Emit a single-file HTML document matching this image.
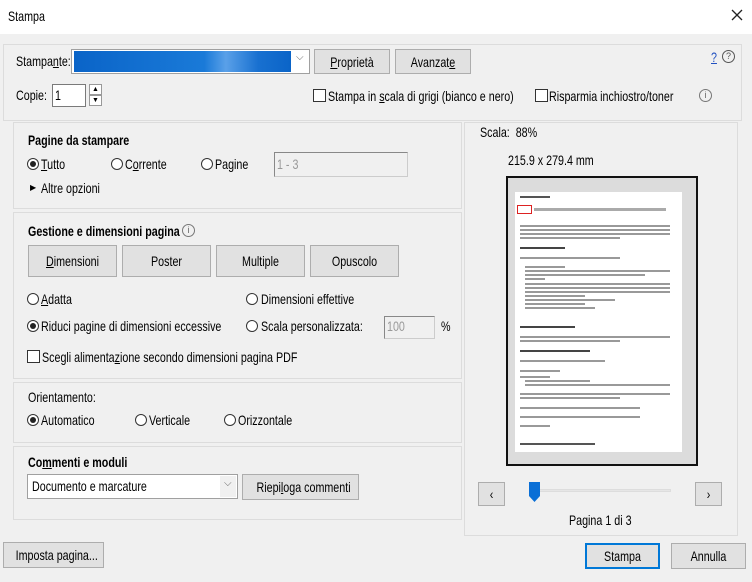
<!DOCTYPE html>
<html><head><meta charset="utf-8"><style>
*{box-sizing:border-box;margin:0;padding:0}
body{width:752px;height:582px;background:#f0f0f0;position:relative;overflow:hidden;font-family:"Liberation Sans",sans-serif;font-size:14px;color:#000}
.a{position:absolute}
.t{position:absolute;white-space:nowrap;transform:scaleX(.765);transform-origin:0 50%;line-height:14px}
.b{font-weight:bold}
.panel{position:absolute;border:1px solid #dcdcdc;background:#f0f0f0}
.btn{position:absolute;background:#e1e1e1;border:1px solid #adadad}
.btn span{position:absolute;left:0;right:0;top:50%;margin-top:-7px;text-align:center;line-height:14px;white-space:nowrap;transform:scaleX(.765)}
.r{position:absolute;width:12px;height:12px;border:1px solid #333;border-radius:50%;background:#fff}
.r.on::after{content:"";position:absolute;left:2px;top:2px;width:6px;height:6px;border-radius:50%;background:#222}
.c{position:absolute;width:13px;height:13px;border:1px solid #333;background:#fff}
.in{position:absolute;background:#fff;border:1px solid #7a7a7a}
.dis{background:#f0f0f0;border:1px solid #ccc;color:#888}
u{text-decoration:underline}
.ln{position:absolute;height:2px;background:#999}
</style></head><body>
<div class="a" style="left:0;top:0;width:752px;height:34px;background:#fff"></div>
<div class="t" style="left:8px;top:9px">Stampa</div>
<svg class="a" style="left:731px;top:9px" width="12" height="12"><path d="M1 1L11 11M11 1L1 11" stroke="#222" stroke-width="1.3"/></svg>

<div class="panel" style="left:3px;top:44px;width:739px;height:77px"></div>
<div class="t" style="left:16px;top:54px">Stampa<u>n</u>te:</div>
<div class="in" style="left:71px;top:49px;width:239px;height:25px;border-color:#a0a0a0"></div>
<div class="a" style="left:74px;top:51px;width:217px;height:21px;background:linear-gradient(90deg,#0a64c8,#1a7ad8 60%,#5aa0e8 70%,#1870d0 85%,#0a64c8)"></div>
<div class="a" style="left:296px;top:52px;font-size:10px;color:#666">⌵</div>
<div class="btn" style="left:314px;top:49px;width:76px;height:25px"><span><u>P</u>roprietà</span></div>
<div class="btn" style="left:395px;top:49px;width:76px;height:25px"><span>Avanzat<u>e</u></span></div>
<div class="t" style="left:711px;top:50px;color:#2050c0"><u>?</u></div>
<div class="a" style="left:722px;top:50px;width:13px;height:13px;border:1px solid #555;border-radius:50%;font-size:9px;line-height:11px;text-align:center;color:#555">?</div>

<div class="t" style="left:16px;top:88px">Copie:</div>
<div class="in" style="left:52px;top:84px;width:34px;height:23px"></div>
<div class="t" style="left:55px;top:88px">1</div>
<div class="in" style="left:89px;top:84px;width:13px;height:11px;border-color:#999;font-size:7px;line-height:9px;text-align:center">▲</div>
<div class="in" style="left:89px;top:95px;width:13px;height:11px;border-color:#999;font-size:7px;line-height:9px;text-align:center">▼</div>
<div class="c" style="left:313px;top:89px"></div>
<div class="t" style="left:328px;top:89px">Stampa in <u>s</u>cala di grigi (bianco e nero)</div>
<div class="c" style="left:535px;top:89px"></div>
<div class="t" style="left:549px;top:89px">Risparmia inchiostro/toner</div>
<div class="a" style="left:699px;top:89px;width:13px;height:13px;border:1px solid #777;border-radius:50%;font-size:9px;line-height:11px;text-align:center;color:#666">i</div>

<div class="panel" style="left:13px;top:122px;width:449px;height:87px"></div>
<div class="t b" style="left:28px;top:133px">Pagine da stampare</div>
<div class="r on" style="left:27px;top:158px"></div><div class="t" style="left:41px;top:157px"><u>T</u>utto</div>
<div class="r" style="left:111px;top:158px"></div><div class="t" style="left:125px;top:157px">C<u>o</u>rrente</div>
<div class="r" style="left:201px;top:158px"></div><div class="t" style="left:215px;top:157px">Pagine</div>
<div class="in dis" style="left:274px;top:152px;width:134px;height:25px;border-top-color:#888;border-left-color:#888"></div>
<div class="t" style="left:277px;top:157px;color:#999">1 - 3</div>
<div class="a" style="left:30px;top:183px;font-size:8px">▶</div>
<div class="t" style="left:41px;top:181px">Altre opzioni</div>

<div class="panel" style="left:13px;top:212px;width:449px;height:167px"></div>
<div class="t b" style="left:28px;top:224px">Gestione e dimensioni pagina</div>
<div class="a" style="left:182px;top:224px;width:13px;height:13px;border:1px solid #777;border-radius:50%;font-size:9px;line-height:11px;text-align:center;color:#666">i</div>
<div class="btn" style="left:28px;top:245px;width:89px;height:32px"><span><u>D</u>imensioni</span></div>
<div class="btn" style="left:122px;top:245px;width:89px;height:32px"><span>Poster</span></div>
<div class="btn" style="left:216px;top:245px;width:89px;height:32px"><span>Multiple</span></div>
<div class="btn" style="left:310px;top:245px;width:89px;height:32px"><span>Opuscolo</span></div>
<div class="r" style="left:27px;top:293px"></div><div class="t" style="left:41px;top:292px"><u>A</u>datta</div>
<div class="r" style="left:246px;top:293px"></div><div class="t" style="left:261px;top:292px">Dimensioni effettive</div>
<div class="r on" style="left:27px;top:320px"></div><div class="t" style="left:41px;top:319px">Riduci pagine di dimensioni eccessive</div>
<div class="r" style="left:246px;top:320px"></div><div class="t" style="left:261px;top:319px">Scala personalizzata:</div>
<div class="in dis" style="left:384px;top:316px;width:51px;height:23px;border-top-color:#888;border-left-color:#888"></div>
<div class="t" style="left:387px;top:319px;color:#999">100</div>
<div class="t" style="left:441px;top:319px">%</div>
<div class="c" style="left:27px;top:350px"></div>
<div class="t" style="left:42px;top:350px">Scegli alimenta<u>z</u>ione secondo dimensioni pagina PDF</div>

<div class="panel" style="left:13px;top:382px;width:449px;height:61px"></div>
<div class="t" style="left:28px;top:390px">Orientamento:</div>
<div class="r on" style="left:27px;top:414px"></div><div class="t" style="left:41px;top:413px">Automatico</div>
<div class="r" style="left:135px;top:414px"></div><div class="t" style="left:149px;top:413px">Verticale</div>
<div class="r" style="left:224px;top:414px"></div><div class="t" style="left:238px;top:413px">Orizzontale</div>

<div class="panel" style="left:13px;top:446px;width:449px;height:74px"></div>
<div class="t b" style="left:28px;top:455px">Co<u>m</u>menti e moduli</div>
<div class="in" style="left:27px;top:474px;width:211px;height:25px;border-color:#a0a0a0"></div>
<div class="a" style="left:220px;top:476px;width:16px;height:21px;background:#f0f0f0"></div>
<div class="a" style="left:224px;top:478px;font-size:10px;color:#666">⌵</div>
<div class="t" style="left:32px;top:479px">Documento e marcature</div>
<div class="btn" style="left:242px;top:474px;width:117px;height:26px"><span>Riepi<u>l</u>oga commenti</span></div>

<div class="panel" style="left:464px;top:122px;width:274px;height:414px"></div>
<div class="t" style="left:480px;top:125px">Scala:&nbsp; 88%</div>
<div class="t" style="left:508px;top:153px">215.9 x 279.4 mm</div>
<div class="a" style="left:506px;top:176px;width:192px;height:290px;border:2px solid #111;background:#dcdcdc"></div>
<div class="a" style="left:515px;top:192px;width:167px;height:260px;background:#fff"></div>
<div class="a" style="left:517px;top:205px;width:15px;height:9px;border:1px solid #d22"></div>
<div class="ln" style="left:520px;top:196px;width:30px;background:#555"></div>
<div class="ln" style="left:534px;top:208px;width:132px;height:3px;background:#aaa"></div>
<div class="ln" style="left:520px;top:225px;width:150px"></div>
<div class="ln" style="left:520px;top:229px;width:150px"></div>
<div class="ln" style="left:520px;top:233px;width:150px"></div>
<div class="ln" style="left:520px;top:237px;width:100px"></div>
<div class="ln" style="left:520px;top:247px;width:45px;background:#444"></div>
<div class="ln" style="left:520px;top:257px;width:100px"></div>
<div class="ln" style="left:525px;top:266px;width:40px"></div>
<div class="ln" style="left:525px;top:270px;width:145px"></div>
<div class="ln" style="left:525px;top:274px;width:120px"></div>
<div class="ln" style="left:525px;top:278px;width:20px"></div>
<div class="ln" style="left:525px;top:283px;width:145px"></div>
<div class="ln" style="left:525px;top:287px;width:145px"></div>
<div class="ln" style="left:525px;top:291px;width:145px"></div>
<div class="ln" style="left:525px;top:295px;width:60px"></div>
<div class="ln" style="left:525px;top:299px;width:90px"></div>
<div class="ln" style="left:525px;top:303px;width:60px"></div>
<div class="ln" style="left:525px;top:307px;width:70px"></div>
<div class="ln" style="left:520px;top:326px;width:55px;background:#444"></div>
<div class="ln" style="left:520px;top:336px;width:150px"></div>
<div class="ln" style="left:520px;top:340px;width:100px"></div>
<div class="ln" style="left:520px;top:350px;width:70px;background:#444"></div>
<div class="ln" style="left:520px;top:360px;width:85px"></div>
<div class="ln" style="left:520px;top:370px;width:40px"></div>
<div class="ln" style="left:520px;top:376px;width:30px"></div>
<div class="ln" style="left:525px;top:380px;width:65px"></div>
<div class="ln" style="left:525px;top:384px;width:145px"></div>
<div class="ln" style="left:520px;top:393px;width:150px"></div>
<div class="ln" style="left:520px;top:397px;width:100px"></div>
<div class="ln" style="left:520px;top:407px;width:120px"></div>
<div class="ln" style="left:520px;top:416px;width:120px"></div>
<div class="ln" style="left:520px;top:425px;width:30px"></div>
<div class="ln" style="left:520px;top:443px;width:75px;background:#555"></div>

<div class="btn" style="left:478px;top:482px;width:27px;height:24px"><span>‹</span></div>
<div class="a" style="left:532px;top:489px;width:139px;height:3px;background:#e6e6e6;border:1px solid #ddd"></div>
<svg class="a" style="left:528px;top:481px" width="13" height="22"><path d="M1 1h11v14l-5.5 6l-5.5-6z" fill="#0a6fd6"/></svg>
<div class="btn" style="left:695px;top:482px;width:27px;height:24px"><span>›</span></div>
<div class="t" style="left:569px;top:513px">Pagina 1 di 3</div>

<div class="btn" style="left:3px;top:542px;width:101px;height:26px"><span>Imposta pagina...</span></div>
<div class="btn" style="left:585px;top:543px;width:75px;height:26px;border:2px solid #0078d7"><span>Stampa</span></div>
<div class="btn" style="left:671px;top:543px;width:75px;height:26px"><span>Annulla</span></div>
</body></html>
